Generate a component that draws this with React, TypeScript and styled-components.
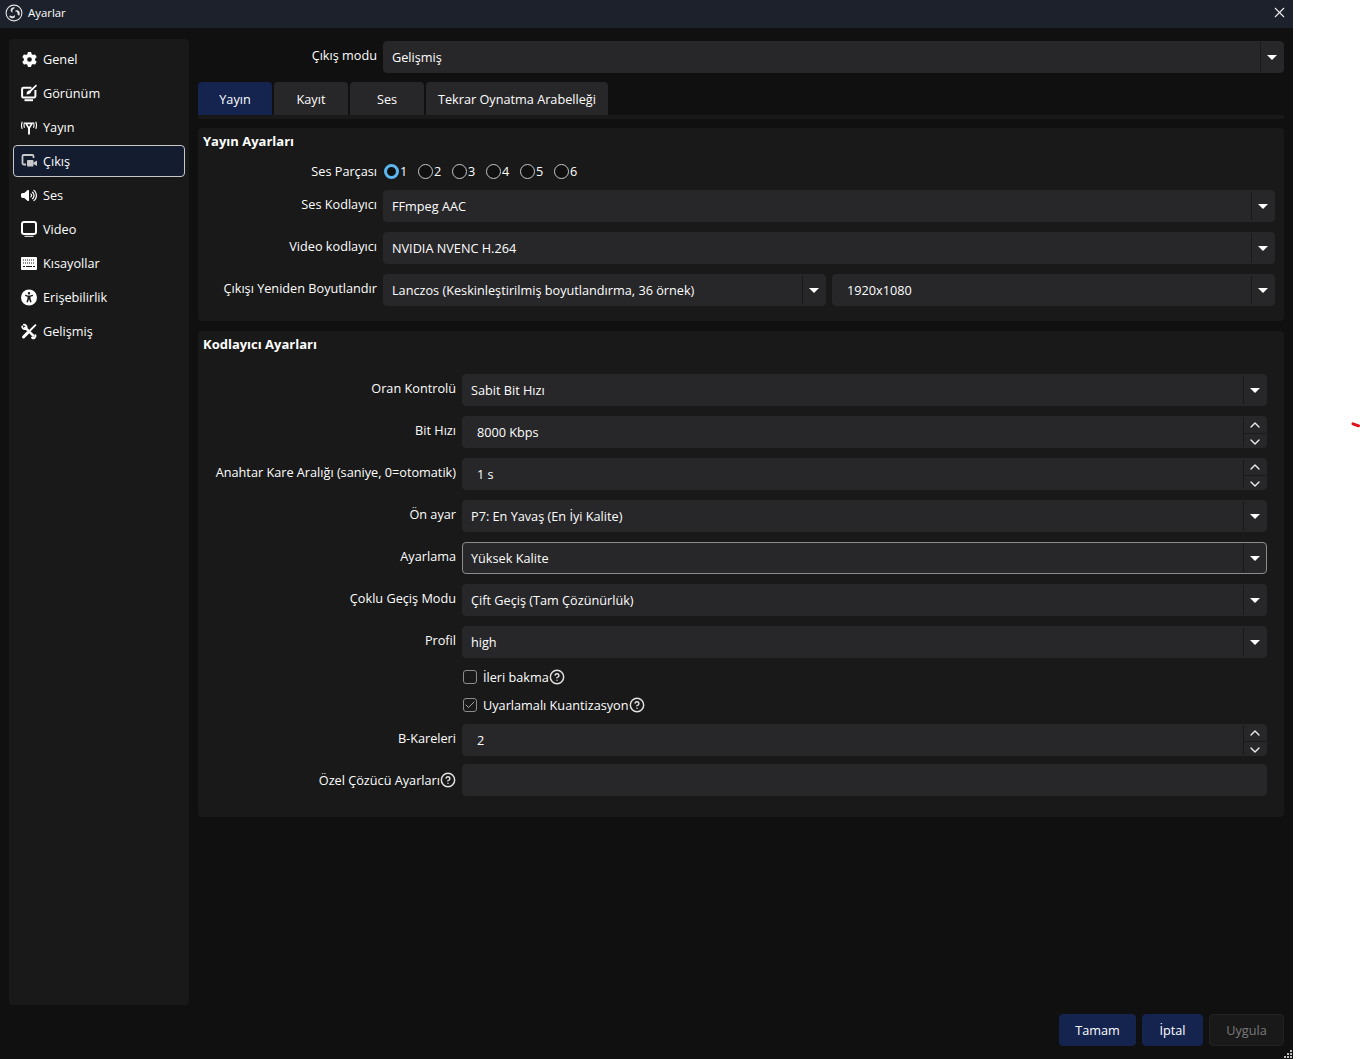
import React from 'react';
import styled, {createGlobalStyle} from "styled-components";
import {ChevronDown, ChevronUp, CircleHelp, Check, X} from "lucide-react";
import {FaGear, FaVolumeHigh, FaUniversalAccess} from "react-icons/fa6";

const colors = {
    window: "#101010",
    panel: "#191919",
    field: "#272729",
    accent: "#14244f",
    text: "#fefefe",
}

const GlobalStyle = createGlobalStyle`
    html, body {
        margin: 0;
        background: #fff;
    }

    body {
        font-family: "Open Sans", "Liberation Sans", sans-serif;
        font-size: 12.7px;
        color: ${colors.text};
    }
`

const ObsLogo = () => (
    <svg width="18" height="18" viewBox="0 0 18 18" fill="none">
        <circle cx="9" cy="9" r="7.9" stroke="#e4e4e4" strokeWidth="1.1"/>
        <path d="M9.6 3.2c-2.2-.3-3.9 1-4 2.8-.1 1.4 1 2.5 2.3 2.5-.9-1-.7-2.7.5-3.5.8-.6 1.5-.9 1.2-1.8z" fill="#e4e4e4"/>
        <path d="M4.2 12.2c1 1.9 3 2.7 4.6 1.8 1.2-.7 1.6-2.2.9-3.3-.4 1.3-2 2-3.3 1.4-.9-.4-1.5-.9-2.2.1z" fill="#e4e4e4"/>
        <path d="M14.3 11.4c1-2 .4-4-1.2-4.9-1.2-.7-2.7-.3-3.4.9 1.3-.3 2.7.7 2.9 2.1.1 1 0 1.7 1.7 1.9z" fill="#e4e4e4"/>
    </svg>
)

const AppearanceIcon = () => (
    <svg width="16" height="18" viewBox="0 0 16 18" fill="none">
        <path d="M10.500 3.800H2.300a1.200 1.200 0 0 0-1.200 1.200v7.200a1.200 1.200 0 0 0 1.200 1.200h10.900a1.200 1.200 0 0 0 1.200-1.200V6" stroke="#fff" strokeWidth="2"/>
        <path d="M15 .6 8.800 6.300c-1.500.2-3.300 1.200-3.300 4.300 2.900 0 4.300-1.200 4.800-3L16 1.800z" fill="#fff"/>
        <path d="M3.500 16.200h8.500" stroke="#fff" strokeWidth="2"/>
    </svg>
)

const StreamIcon = () => (
    <svg width="17" height="16" viewBox="0 0 17 16" fill="none" stroke="#fff">
        <path d="M8.500 8v8" strokeWidth="2"/>
        <path d="M5.200 4.200h6.600L8.500 9.500z" strokeWidth="1.700"/>
        <path d="M3.700 3.200c-.7 2-.7 3.600 0 5.600M13.300 3.200c.7 2 .7 3.600 0 5.600M1.300 2.500c-1 2.500-1 5 0 7.500M15.700 2.500c1 2.500 1 5 0 7.500" strokeWidth="1.200"/>
    </svg>
)

const OutputIcon = () => (
    <svg width="16" height="16" viewBox="0 0 16 16" fill="none">
        <path d="M5 11.500H2.700a1.200 1.200 0 0 1-1.200-1.200V3.200A1.200 1.200 0 0 1 2.700 2h8.600a1.200 1.200 0 0 1 1.200 1.200V5" stroke="#c9c9c9" strokeWidth="1.800"/>
        <rect x="6" y="7" width="6.500" height="6.500" rx="1" fill="#c9c9c9"/>
        <path d="M12.500 9.500 16 7.500v5.500l-3.500-2z" fill="#c9c9c9"/>
    </svg>
)

const VideoIcon = () => (
    <svg width="16" height="16" viewBox="0 0 16 16" fill="none">
        <rect x="1" y="1" width="14" height="12" rx="2" stroke="#fff" strokeWidth="2"/>
        <path d="M3.500 15.300h9" stroke="#fff" strokeWidth="1"/>
    </svg>
)

const KeyboardIcon = () => (
    <svg width="16" height="13" viewBox="0 0 16 13">
        <rect width="16" height="13" rx="1" fill="#fff"/>
        <path d="M2 3h12M2 6h12" stroke="#191919" strokeWidth="1" strokeDasharray="1 1"/>
        <path d="M2 9.500h2M5 9.500h6M12 9.500h2" stroke="#191919" strokeWidth="1"/>
    </svg>
)

const ToolsIcon = () => (
    <svg width="17" height="17" viewBox="0 0 17 17" fill="none" stroke="#fff" strokeLinecap="round">
        <path d="M4.500 4.500 13 13" strokeWidth="2.600"/>
        <path d="M1.300 3c-.2 1.800 1.300 3.300 3.200 3a2.600 2.600 0 0 0 1.500-1.500C6.300 2.600 4.800 1.200 3 1.300" strokeWidth="1.900"/>
        <path d="M11.800 15c1.700 1.400 3.800.2 3.500-2.500" strokeWidth="2.200"/>
        <path d="M15.300 1.800 9.800 7.200" strokeWidth="2"/>
        <path d="M7 10 2.700 14.300" strokeWidth="3.200"/>
    </svg>
)

const menu = [
    {name: "Genel", icon: <FaGear size={15}/>},
    {name: "Görünüm", icon: <AppearanceIcon/>},
    {name: "Yayın", icon: <StreamIcon/>},
    {name: "Çıkış", icon: <OutputIcon/>, active: true},
    {name: "Ses", icon: <FaVolumeHigh size={17}/>},
    {name: "Video", icon: <VideoIcon/>},
    {name: "Kısayollar", icon: <KeyboardIcon/>},
    {name: "Erişebilirlik", icon: <FaUniversalAccess size={17}/>},
    {name: "Gelişmiş", icon: <ToolsIcon/>},
]

const tabs = ["Yayın", "Kayıt", "Ses", "Tekrar Oynatma Arabelleği"]
const tracks = ["1", "2", "3", "4", "5", "6"]

const Select = (props: { value: string, focused?: boolean, wide?: boolean }) => (
    <Field $focused={props.focused}>
        <FieldText $wide={props.wide}>{props.value}</FieldText>
        <ArrowBox><Arrow/></ArrowBox>
    </Field>
)

const Spin = (props: { value: string }) => (
    <Field>
        <FieldText $wide>{props.value}</FieldText>
        <SpinBox>
            <SpinButton><ChevronUp size={16} strokeWidth={2}/></SpinButton>
            <SpinButton><ChevronDown size={16} strokeWidth={2}/></SpinButton>
        </SpinBox>
    </Field>
)

const Help = () => <HelpIcon><CircleHelp size={16} strokeWidth={2.2}/></HelpIcon>

export default function App() {
    return (
        <>
            <GlobalStyle/>
            <Window>
                <TitleBar>
                    <ObsLogo/>
                    <TitleText>Ayarlar</TitleText>
                    <CloseButton><X size={17} strokeWidth={1.5}/></CloseButton>
                </TitleBar>
                <Body>
                    <Sidebar>
                        {menu.map(item => (
                            <MenuItem key={item.name} $active={item.active}>
                                <MenuIcon>{item.icon}</MenuIcon>
                                {item.name}
                            </MenuItem>
                        ))}
                    </Sidebar>
                    <Main>
                        <ModeRow>
                            <Label>Çıkış modu</Label>
                            <Select value="Gelişmiş"/>
                        </ModeRow>
                        <TabBar>
                            {tabs.map(tab => (
                                <Tab key={tab} $active={tab === "Yayın"}>{tab}</Tab>
                            ))}
                        </TabBar>
                        <StreamGroup>
                            <GroupTitle>Yayın Ayarları</GroupTitle>
                            <RadioRow>
                                <RadioTitle>Ses Parçası</RadioTitle>
                                <Radios>
                                    {tracks.map(track => (
                                        <RadioLabel key={track}>
                                            <Radio $checked={track === "1"}/>
                                            {track}
                                        </RadioLabel>
                                    ))}
                                </Radios>
                            </RadioRow>
                            <StreamRow>
                                <Label>Ses Kodlayıcı</Label>
                                <Select value="FFmpeg AAC"/>
                            </StreamRow>
                            <StreamRow>
                                <Label>Video kodlayıcı</Label>
                                <Select value="NVIDIA NVENC H.264"/>
                            </StreamRow>
                            <StreamRow>
                                <Label>Çıkışı Yeniden Boyutlandır</Label>
                                <Pair>
                                    <Select value="Lanczos (Keskinleştirilmiş boyutlandırma, 36 örnek)"/>
                                    <Select value="1920x1080" wide/>
                                </Pair>
                            </StreamRow>
                        </StreamGroup>
                        <EncoderGroup>
                            <EncoderTitle>Kodlayıcı Ayarları</EncoderTitle>
                            <EncoderRow>
                                <Label>Oran Kontrolü</Label>
                                <Select value="Sabit Bit Hızı"/>
                            </EncoderRow>
                            <EncoderRow>
                                <Label>Bit Hızı</Label>
                                <Spin value="8000 Kbps"/>
                            </EncoderRow>
                            <EncoderRow>
                                <Label>Anahtar Kare Aralığı (saniye, 0=otomatik)</Label>
                                <Spin value="1 s"/>
                            </EncoderRow>
                            <EncoderRow>
                                <Label>Ön ayar</Label>
                                <Select value="P7: En Yavaş (En İyi Kalite)"/>
                            </EncoderRow>
                            <EncoderRow>
                                <Label>Ayarlama</Label>
                                <Select value="Yüksek Kalite" focused/>
                            </EncoderRow>
                            <EncoderRow>
                                <Label>Çoklu Geçiş Modu</Label>
                                <Select value="Çift Geçiş (Tam Çözünürlük)"/>
                            </EncoderRow>
                            <EncoderRow>
                                <Label>Profil</Label>
                                <Select value="high"/>
                            </EncoderRow>
                            <CheckRow>
                                <CheckBox/>
                                <span>İleri bakma</span>
                                <Help/>
                            </CheckRow>
                            <CheckRow>
                                <CheckBox><Check size={12} strokeWidth={1.6}/></CheckBox>
                                <span>Uyarlamalı Kuantizasyon</span>
                                <Help/>
                            </CheckRow>
                            <EncoderRow>
                                <Label>B-Kareleri</Label>
                                <Spin value="2"/>
                            </EncoderRow>
                            <CustomRow>
                                <CustomLabel>Özel Çözücü Ayarları<Help/></CustomLabel>
                                <Field/>
                            </CustomRow>
                        </EncoderGroup>
                    </Main>
                </Body>
                <Footer>
                    <FooterButton>Tamam</FooterButton>
                    <FooterButton $width={61}>İptal</FooterButton>
                    <FooterButton $width={75} $disabled>Uygula</FooterButton>
                    <Grip>
                        <svg width="9" height="9" viewBox="0 0 9 9" fill="#bdbdbd">
                            <rect x="6" width="2" height="2"/>
                            <rect x="3" y="3" width="2" height="2"/>
                            <rect x="6" y="3" width="2" height="2"/>
                            <rect y="6" width="2" height="2"/>
                            <rect x="3" y="6" width="2" height="2"/>
                            <rect x="6" y="6" width="2" height="2"/>
                        </svg>
                    </Grip>
                </Footer>
            </Window>
            <RedMark>
                <svg width="9" height="6" viewBox="0 0 9 6">
                    <path d="M2 1.800 7.500 3.800" stroke="#e0101c" strokeWidth="3" strokeLinecap="round"/>
                </svg>
            </RedMark>
        </>
    );
}

const Window = styled.div`
    width: 1293px;
    height: 1059px;
    display: flex;
    flex-direction: column;
    background-color: ${colors.window};
`

const TitleBar = styled.header`
    height: 28px;
    flex-shrink: 0;
    display: flex;
    align-items: center;
    padding: 0 5px 3px 5px;
    box-sizing: border-box;
    background-color: #1c212b;

    & > svg {
        margin-right: 5px;
    }
`

const TitleText = styled.span`
    font-size: 11.4px;
    flex: 1;
`

const CloseButton = styled.span`
    display: flex;
    color: #eee;
`

const Body = styled.div`
    display: flex;
    gap: 9px;
    padding: 11px 9px 0;
    height: 977px;
    box-sizing: border-box;
`

const Sidebar = styled.nav`
    width: 180px;
    flex-shrink: 0;
    box-sizing: border-box;
    padding: 4px;
    display: flex;
    flex-direction: column;
    gap: 2px;
    border-radius: 4px;
    background-color: ${colors.panel};
`

const MenuItem = styled.div<{ $active?: boolean }>`
    height: 32px;
    box-sizing: border-box;
    display: flex;
    align-items: center;
    gap: 6px;
    padding-left: 7px;
    border: 1px solid ${props => props.$active ? "#c8c8c8" : "transparent"};
    border-radius: 4px;
    background-color: ${props => props.$active ? "#141c30" : "transparent"};
`

const MenuIcon = styled.span`
    width: 16px;
    height: 16px;
    display: flex;
    align-items: center;
    justify-content: center;
`

const Main = styled.main`
    flex: 1;
    min-width: 0;
    display: flex;
    flex-direction: column;
`

const Label = styled.label`
    display: flex;
    justify-content: flex-end;
    align-items: center;
    height: 28px;
    white-space: nowrap;
`

const RadioTitle = styled(Label)`
    height: 18px;
`

const CustomLabel = styled(Label)`
    height: 32px;
`

const ModeRow = styled.div`
    display: grid;
    grid-template-columns: 179px 1fr;
    gap: 6px;
    margin-top: 2px;
`

const Field = styled.div<{ $focused?: boolean }>`
    height: 32px;
    min-width: 0;
    box-sizing: border-box;
    display: flex;
    align-items: stretch;
    border: 1px solid ${props => props.$focused ? "#8c8c8c" : colors.field};
    border-radius: 4px;
    background-color: ${colors.field};
`

const FieldText = styled.span<{ $wide?: boolean }>`
    flex: 1;
    min-width: 0;
    display: flex;
    align-items: center;
    padding-left: ${props => props.$wide ? "14px" : "8px"};
    white-space: nowrap;
`

const ArrowBox = styled.span`
    width: 23px;
    display: flex;
    align-items: center;
    justify-content: center;
    box-shadow: inset 1px 0 0 ${colors.panel};
`

const Arrow = styled.i`
    width: 0;
    height: 0;
    border-left: 5px solid transparent;
    border-right: 5px solid transparent;
    border-top: 5px solid #fff;
`

const SpinBox = styled.span`
    width: 23px;
    display: grid;
    grid-template-rows: 1fr 1fr;
    box-shadow: inset 1px 0 0 ${colors.panel};
`

const SpinButton = styled.span`
    display: flex;
    align-items: center;
    justify-content: center;
    color: #eee;

    & + & {
        border-top: 1px solid ${colors.panel};
    }
`

const TabBar = styled.div`
    display: flex;
    gap: 2px;
    margin-top: 9px;
    border-bottom: 4px solid ${colors.panel};
`

const Tab = styled.div<{ $active?: boolean }>`
    height: 33px;
    min-width: 74px;
    box-sizing: border-box;
    padding: 1px 12px 0;
    display: flex;
    align-items: center;
    justify-content: center;
    border-radius: 4px 4px 0 0;
    background-color: ${props => props.$active ? colors.accent : colors.field};
`

const Group = styled.section`
    box-sizing: border-box;
    display: flex;
    flex-direction: column;
    gap: 10px;
    border-radius: 4px;
    background-color: ${colors.panel};
`

const StreamGroup = styled(Group)`
    margin-top: 9px;
    padding: 4px 9px 15px 5px;
`

const EncoderGroup = styled(Group)`
    margin-top: 10px;
    padding: 4px 17px 21px 5px;
`

const GroupTitle = styled.h3`
    margin: 0 0 2px;
    height: 18px;
    line-height: 18px;
    font-size: 13px;
    font-weight: 700;
`

const EncoderTitle = styled(GroupTitle)`
    margin-bottom: 11px;
`

const StreamRow = styled.div`
    display: grid;
    grid-template-columns: 174px 1fr;
    gap: 6px;
`

const RadioRow = styled(StreamRow)`
    height: 18px;
    align-items: center;
`

const Radios = styled.div`
    display: flex;
    gap: 11px;
    padding-left: 1px;
`

const RadioLabel = styled.span`
    width: 23px;
    display: flex;
    align-items: center;
`

const Radio = styled.i<{ $checked?: boolean }>`
    width: 15px;
    height: 15px;
    box-sizing: border-box;
    flex-shrink: 0;
    margin-right: 1px;
    border-radius: 50%;
    border: ${props => props.$checked ? "3px solid #5cb6ef" : "1px solid #c8c8c8"};
    background-color: #101010;
`

const Pair = styled.div`
    display: grid;
    grid-template-columns: 1fr 1fr;
    gap: 6px;
`

const EncoderRow = styled.div`
    display: grid;
    grid-template-columns: 253px 1fr;
    gap: 6px;
`

const CustomRow = styled(EncoderRow)`
    margin-top: -2px;
`

const CheckRow = styled.div`
    height: 18px;
    line-height: 18px;
    margin-left: 259px;
    display: flex;
    align-items: center;
`

const CheckBox = styled.span`
    width: 14px;
    height: 14px;
    box-sizing: border-box;
    margin: 0 6px 0 1px;
    display: flex;
    align-items: center;
    justify-content: center;
    border: 1px solid #8c8c8c;
    border-radius: 3px;
    color: #c8c8c8;
`

const HelpIcon = styled.span`
    display: inline-flex;
    color: #e2e2e2;
`

const Footer = styled.footer`
    position: relative;
    flex: 1;
    display: flex;
    justify-content: flex-end;
    align-items: flex-start;
    gap: 6px;
    padding: 9px 9px 0 0;
`

const FooterButton = styled.button<{ $width?: number, $disabled?: boolean }>`
    width: ${props => props.$width || 77}px;
    height: 32px;
    padding: 0;
    font: inherit;
    color: ${props => props.$disabled ? "#7a7a7a" : colors.text};
    border: 1px solid ${props => props.$disabled ? "#222" : colors.accent};
    border-radius: 4px;
    background-color: ${props => props.$disabled ? colors.panel : colors.accent};
`

const Grip = styled.span`
    position: absolute;
    right: 0;
    bottom: 0;
    display: flex;
`

const RedMark = styled.span`
    position: absolute;
    left: 1351px;
    top: 422px;
    display: flex;
`
